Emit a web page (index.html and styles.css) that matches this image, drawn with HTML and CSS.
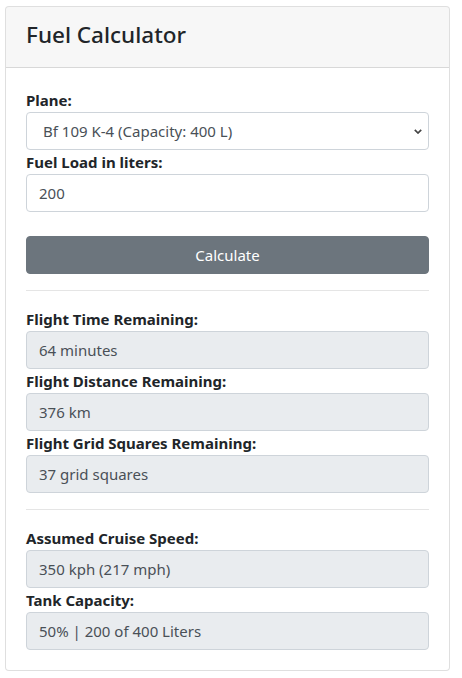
FILE: index.html
```html
<!DOCTYPE html>
<html>
<head>
<meta charset="utf-8">
<link rel="stylesheet" href="styles.css">
</head>
<body>
<div class="card">
  <div class="card-header">
    <h4 class="title">Fuel Calculator</h4>
  </div>
  <div class="card-body">
    <label class="label">Plane:</label>
    <select class="control select">
      <option>Bf 109 K-4 (Capacity: 400 L)</option>
    </select>
    <label class="label">Fuel Load in liters:</label>
    <input class="control" type="text" value="200">
    <button class="btn">Calculate</button>
    <hr class="rule">
    <label class="label">Flight Time Remaining:</label>
    <input class="control readonly" type="text" value="64 minutes" readonly>
    <label class="label">Flight Distance Remaining:</label>
    <input class="control readonly" type="text" value="376 km" readonly>
    <label class="label">Flight Grid Squares Remaining:</label>
    <input class="control readonly" type="text" value="37 grid squares" readonly>
    <hr class="rule">
    <label class="label">Assumed Cruise Speed:</label>
    <input class="control readonly" type="text" value="350 kph (217 mph)" readonly>
    <label class="label">Tank Capacity:</label>
    <input class="control readonly" type="text" value="50% | 200 of 400 Liters" readonly>
  </div>
</div>
</body>
</html>
```
FILE: styles.css
```css
* { box-sizing: border-box; }
html, body { margin: 0; padding: 0; background: #fff; }
body {
  padding: 6px 0 0 5px;
  font-family: "Noto Sans", "Open Sans", sans-serif;
  font-size: 15px;
  line-height: 24px;
  color: #212529;
}
.card {
  width: 445px;
  border: 1px solid rgba(0,0,0,.125);
  border-radius: 4px;
  background: #fff;
}
.card-header {
  height: 61px;
  padding: 14px 20px 0;
  background: rgba(0,0,0,.03);
  border-bottom: 1px solid rgba(0,0,0,.125);
  border-radius: 3px 3px 0 0;
}
.title {
  margin: 0;
  font-size: 22.5px;
  line-height: 28px;
  font-weight: 500;
  color: #212529;
}
.card-body {
  padding: 20px;
  display: flex;
  flex-direction: column;
}
.label {
  display: block;
  font-weight: 700;
  height: 24px;
  line-height: 24px;
}
.control {
  display: block;
  width: 100%;
  height: 38px;
  margin: 0;
  padding: 6px 12px;
  font-family: inherit;
  font-size: 15px;
  line-height: 24px;
  color: #495057;
  background: #fff;
  border: 1px solid #ced4da;
  border-radius: 4px;
  outline: none;
}
.select {
  -webkit-appearance: none;
  appearance: none;
  padding-left: 16px;
  color: #495057;
  background-image: url("data:image/svg+xml,%3Csvg xmlns='http://www.w3.org/2000/svg' width='8' height='5' viewBox='0 0 8 5'%3E%3Cpath d='M0.8 0.8l3.2 3.2 3.2-3.2' fill='none' stroke='%23444' stroke-width='1.7'/%3E%3C/svg%3E");
  background-repeat: no-repeat;
  background-position: right 6px center;
  background-size: 8px 5px;
}
.readonly {
  background: #e9ecef;
}
.btn {
  display: block;
  width: 100%;
  height: 38px;
  margin-top: 24px;
  padding: 6px 12px;
  font-family: inherit;
  font-size: 15px;
  line-height: 24px;
  color: #fff;
  background: #6c757d;
  border: 1px solid #6c757d;
  border-radius: 4px;
}
.rule {
  margin: 16px 0;
  border: 0;
  border-top: 1px solid rgba(0,0,0,.1);
  height: 0;
}
```
